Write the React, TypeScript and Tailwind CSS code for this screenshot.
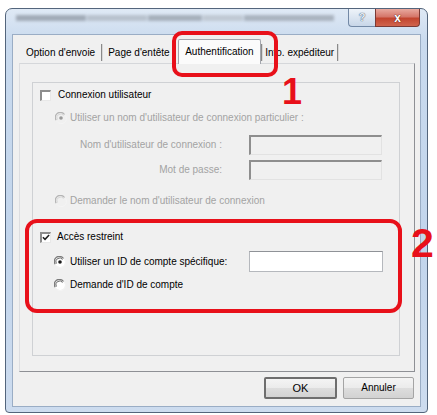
import React from "react";

const Radio = ({ checked, disabled }: { checked?: boolean; disabled?: boolean }) => (
  <svg width="12" height="12" viewBox="0 0 12 12" className="shrink-0">
    <circle cx="6" cy="6" r="5" fill={disabled ? "#f0f0f0" : "#ffffff"} />
    <path d="M9.5 2.5 A5 5 0 0 0 1.2 8.2" fill="none" stroke={disabled ? "#b4b4b4" : "#7a7a7a"} strokeWidth="1.2" />
    <path d="M8.6 3.4 A3.8 3.8 0 0 0 2.3 7.6" fill="none" stroke={disabled ? "#d0d0d0" : "#505050"} strokeWidth="0.9" />
    <path d="M1.9 9.3 A5 5 0 0 0 10.6 3.6" fill="none" stroke="#f4f4f4" strokeWidth="1" />
    {checked && <circle cx="6" cy="6" r="1.8" fill={disabled ? "#9a9a9a" : "#1a1a1a"} />}
  </svg>
);

const Check = ({ checked }: { checked?: boolean }) => (
  <div className="w-[11px] h-[11px] shrink-0 bg-white border-t-[2px] border-l-[2px] border-t-[#8d8d8d] border-l-[#8d8d8d] border-r border-b border-r-[#e8e8e8] border-b-[#e8e8e8] flex items-center justify-center">
    {checked && (
      <svg width="9" height="9" viewBox="0 0 9 9">
        <path d="M1 4.2 L3.4 6.6 L8 1.6" fill="none" stroke="#1e1e1e" strokeWidth="1.7" />
      </svg>
    )}
  </div>
);

const Sep = () => (
  <div className="flex self-end mb-[2px] h-[17px]">
    <div className="w-px bg-[#8a8a8a]" />
    <div className="w-px bg-[#d8d8d8]" />
  </div>
);

export default function App() {
  return (
    <div className="relative w-[437px] h-[415px] bg-white pt-[8px] pl-[5px] font-['Liberation_Sans',Arial,sans-serif] text-[10px] text-black leading-none">
      {/* Window */}
      <div className="w-[423px] h-[405px] flex flex-col rounded-t-[7px] rounded-b-[4px] border border-[#53657c] bg-[linear-gradient(180deg,#dfe9f5_0%,#c9daee_8%,#c2d5ec_60%,#cddcef_100%)]">
        {/* Title bar */}
        <div className="h-[25px] flex items-start shrink-0">
          <div className="ml-[10px] mt-[6px] w-[318px] h-[6px] flex gap-[1px] blur-[1.4px] opacity-60">
            <div className="w-[70px] bg-[#7d858f]" />
            <div className="w-[60px] bg-[#a3abb5]" />
            <div className="w-[55px] bg-[#858d97]" />
            <div className="w-[40px] bg-[#b0b7bf]" />
            <div className="w-[90px] bg-[#8b939d]" />
          </div>
          <div className="ml-auto mr-[7px] flex">
            <div className="w-[27px] h-[18px] rounded-bl-[4px] border border-t-0 border-r-0 border-[#7389a6] bg-[linear-gradient(180deg,#eef3f9_0%,#dbe5f1_50%,#c8d6e8_100%)] flex items-center justify-center">
              <span className="text-[11px] font-bold text-[#e9eef5] [text-shadow:0_0_1px_#4a5d78,0_0_1px_#4a5d78]">?</span>
            </div>
            <div className="w-[45px] h-[18px] rounded-br-[4px] border border-t-0 border-[#7a3a35] bg-[linear-gradient(180deg,#e8a99f_0%,#d5776a_45%,#c2452f_55%,#d0644d_100%)] flex items-center justify-center">
              <span className="text-[12px] font-bold text-white [text-shadow:0_0_1px_#5a1d16,0_0_1px_#5a1d16]">x</span>
            </div>
          </div>
        </div>

        {/* Client area */}
        <div className="flex-1 mx-[6px] mb-[5px] border border-[#9aadc5] bg-[#f0f0f0] flex flex-col">
          {/* Tabs */}
          <div className="mt-[3px] ml-[6px] h-[25px] flex items-end">
            <div className="h-[21px] flex items-center pl-[7px] pr-[6px]">Option d'envoie</div>
            <Sep />
            <div className="h-[21px] w-[75px] overflow-hidden whitespace-nowrap flex items-center pl-[5px]">Page d'entête</div>
            <div className="h-[25px] w-[83px] -mb-px relative z-10 bg-[#fbfbfb] border border-b-0 border-[#a3a6ad] rounded-t-[2px] flex items-center pl-[6px] pb-[1px]">
              Authentification
            </div>
            <Sep />
            <div className="h-[21px] flex items-center pl-[2px] pr-[3px] whitespace-nowrap">Info. expéditeur</div>
            <Sep />
          </div>

          {/* Tab panel */}
          <div className="ml-[6px] w-[396px] h-[309px] border border-t-[#d5d7da] border-l-[#dcdde0] border-r-[#8e9095] border-b-[#8e9095] bg-[#f0f0f0] flex flex-col">
            <div className="mt-[18px] ml-[12px] w-[368px] h-[274px] border border-[#cfd1d4] flex flex-col pl-[7px]">
              {/* Row 1 */}
              <div className="mt-[4px] h-[16px] flex items-center">
                <Check />
                <span className="ml-[7px]">Connexion utilisateur</span>
              </div>
              {/* Row 2 */}
              <div className="mt-[7px] h-[16px] flex items-center pl-[15px] text-[#a3a3a3]">
                <Radio checked disabled />
                <span className="ml-[3px]">Utiliser un nom d'utilisateur de connexion particulier :</span>
              </div>
              {/* Row 3 */}
              <div className="mt-[9px] h-[20px] flex items-center text-[#a3a3a3]">
                <div className="w-[182px] text-right">Nom d'utilisateur de connexion :</div>
                <div className="ml-[27px] w-[133px] h-[20px] bg-[#f0f0f0] border-t-[2px] border-l-[2px] border-t-[#8e8e8e] border-l-[#8e8e8e] border-r border-b border-r-[#e2e2e2] border-b-[#e2e2e2]" />
              </div>
              {/* Row 4 */}
              <div className="mt-[5px] h-[20px] flex items-center text-[#a3a3a3]">
                <div className="w-[182px] text-right">Mot de passe:</div>
                <div className="ml-[27px] w-[133px] h-[20px] bg-[#f0f0f0] border-t-[2px] border-l-[2px] border-t-[#8e8e8e] border-l-[#8e8e8e] border-r border-b border-r-[#e2e2e2] border-b-[#e2e2e2]" />
              </div>
              {/* Row 5 */}
              <div className="mt-[13px] h-[16px] flex items-center pl-[15px] text-[#a3a3a3]">
                <Radio disabled />
                <span className="ml-[3px]">Demander le nom d'utilisateur de connexion</span>
              </div>
              {/* Row 6 */}
              <div className="mt-[20px] h-[16px] flex items-center">
                <Check checked />
                <span className="ml-[6px]">Accès restreint</span>
              </div>
              {/* Row 7 */}
              <div className="mt-[6px] h-[21px] flex items-center pl-[14px]">
                <Radio checked />
                <span className="ml-[4px] w-[179px]">Utiliser un ID de compte spécifique:</span>
                <div className="w-[134px] h-[21px] bg-white border border-[#b5b8bd] border-t-[#8f9297]" />
              </div>
              {/* Row 8 */}
              <div className="mt-[5px] h-[16px] flex items-center pl-[14px]">
                <Radio />
                <span className="ml-[4px]">Demande d'ID de compte</span>
              </div>
            </div>
          </div>

          {/* Buttons */}
          <div className="mt-[5px] flex justify-end gap-[6px] mr-[6px]">
            <div className="w-[73px] h-[22px] rounded-[2px] border-[2px] border-[#6e6e6e] bg-[linear-gradient(180deg,#f4f4f4_0%,#ebebeb_50%,#dddddd_52%,#d2d2d2_100%)] flex items-center justify-center text-[11px]">
              OK
            </div>
            <div className="w-[71px] h-[22px] rounded-[2px] border border-[#a4a4a4] bg-[linear-gradient(180deg,#f4f4f4_0%,#ebebeb_50%,#dddddd_52%,#d2d2d2_100%)] flex items-center justify-center">
              Annuler
            </div>
          </div>
        </div>
      </div>

      {/* Annotations */}
      <div className="absolute left-[172px] top-[31px] w-[106px] h-[46px] border-[4px] border-[#e8101a] rounded-[10px] z-20" />
      <div className="absolute left-[282px] top-[74px] text-[36px] font-bold text-[#e8101a] z-20">1</div>
      <div className="absolute left-[25px] top-[219px] w-[377px] h-[94px] border-[4px] border-[#e8101a] rounded-[12px] z-20" />
      <div className="absolute left-[411px] top-[223px] text-[41px] font-bold text-[#e8101a] z-20">2</div>
    </div>
  );
}
